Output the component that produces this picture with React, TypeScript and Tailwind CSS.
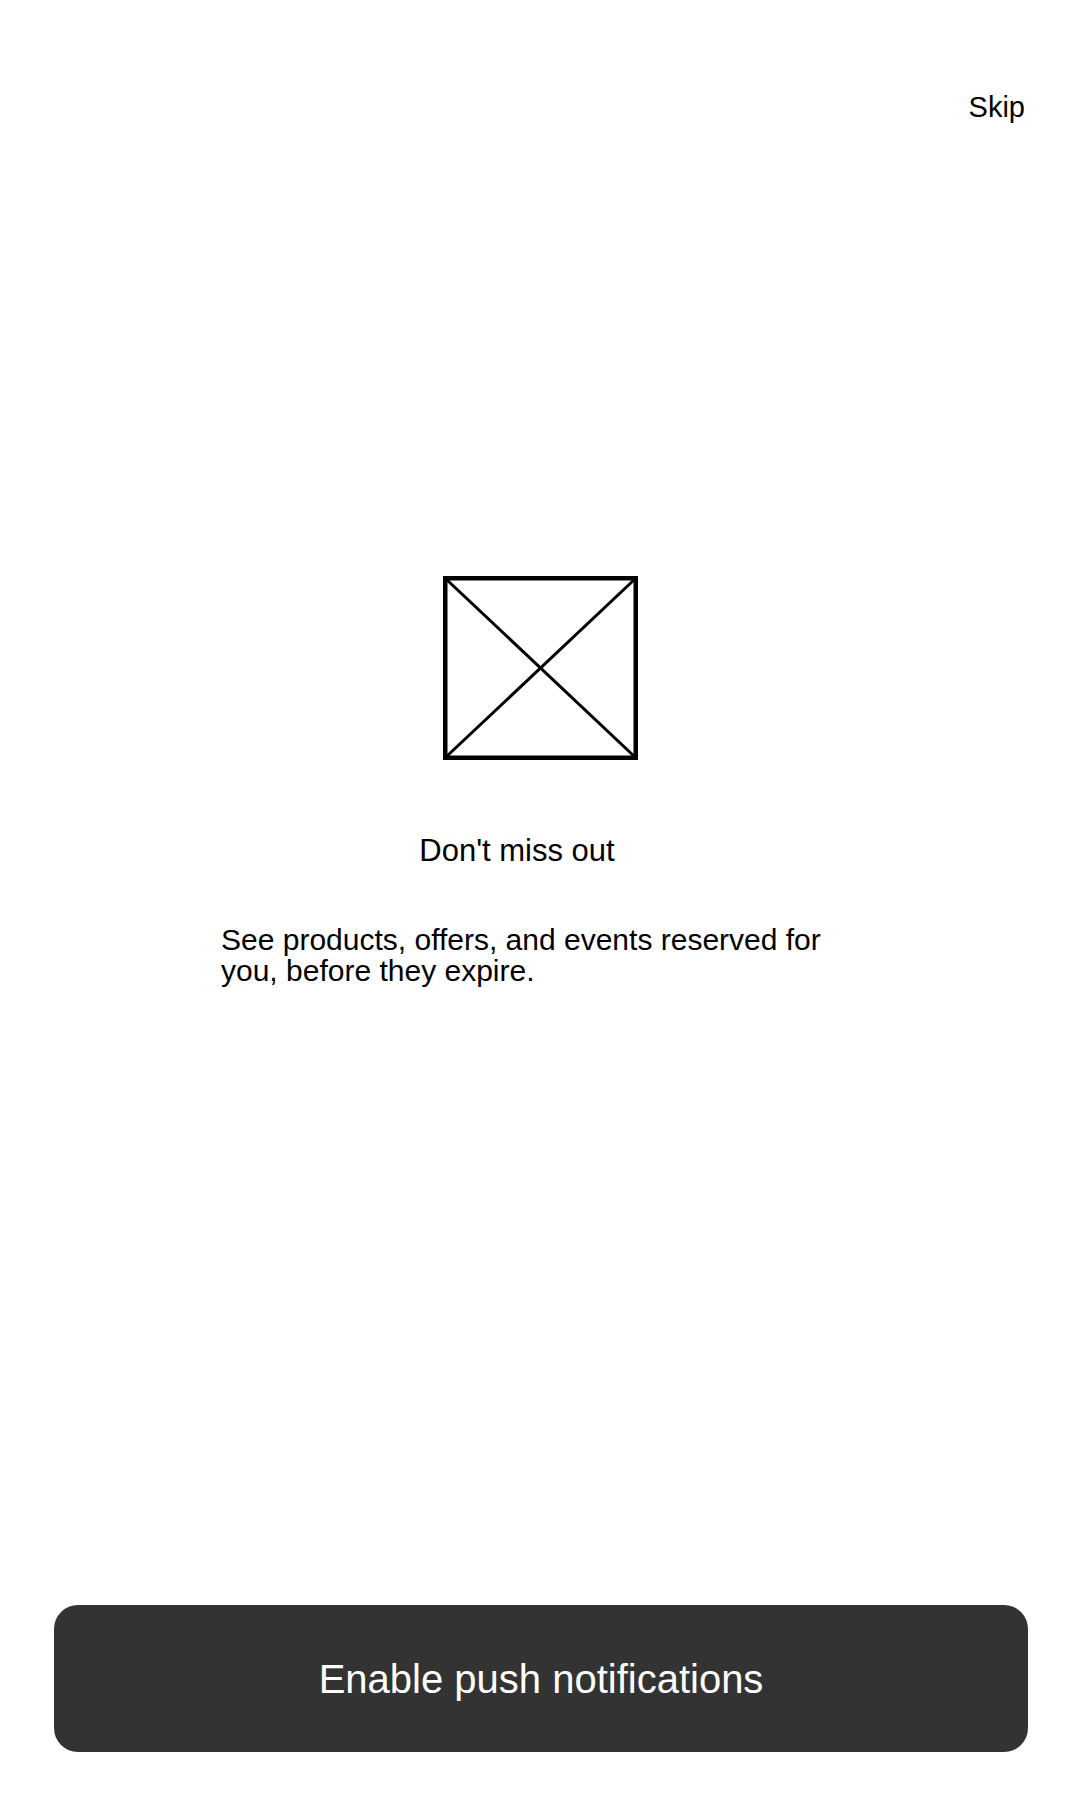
import React from "react";

const ImagePlaceholder = () => (
  <svg width="195" height="184" viewBox="0 0 195 184" className="block">
    <rect x="2.25" y="2.25" width="190.5" height="179.5" fill="none" stroke="#000" strokeWidth="4.5" />
    <line x1="3" y1="3" x2="192" y2="181" stroke="#000" strokeWidth="3" />
    <line x1="192" y1="3" x2="3" y2="181" stroke="#000" strokeWidth="3" />
  </svg>
);

export default function App() {
  return (
    <div
      className="flex flex-col h-[1800px] w-full bg-white text-black"
      style={{ fontFamily: '"Liberation Sans", Arial, sans-serif' }}
    >
      <div className="flex justify-end pt-[93px] pr-[55px]">
        <button className="text-[29px] leading-none">Skip</button>
      </div>

      <div className="flex justify-center mt-[454px]">
        <ImagePlaceholder />
      </div>

      <div className="flex flex-col pl-[221px] mt-[75px]">
        <h1 className="w-[592px] text-center text-[31px] leading-none font-normal">
          Don't miss out
        </h1>
        <p className="w-[630px] mt-[58px] text-[30px] leading-[31px]">
          See products, offers, and events reserved for you, before they expire.
        </p>
      </div>

      <div className="flex-1" />

      <div className="pl-[54px] pr-[52px] pb-[48px]">
        <button className="flex items-center justify-center w-full h-[147px] rounded-[24px] bg-[#333333] text-white text-[40px] leading-none">
          Enable push notifications
        </button>
      </div>
    </div>
  );
}
